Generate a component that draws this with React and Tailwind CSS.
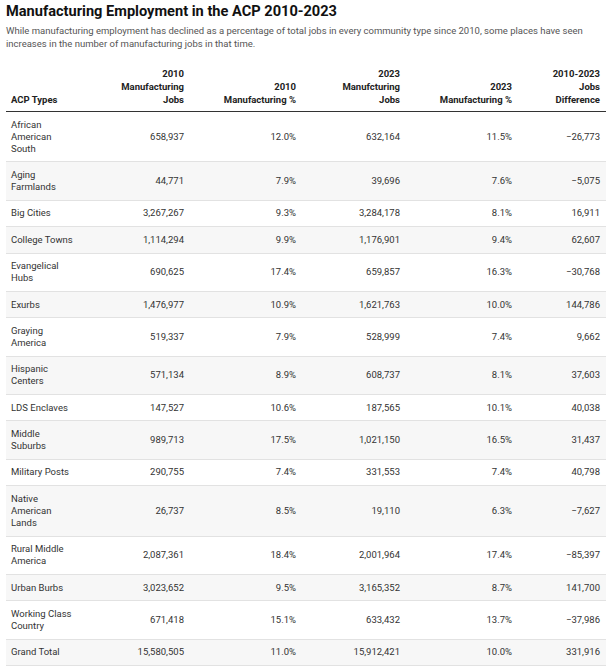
import React from "react";

const rows = [
  [["African", "American", "South"], "658,937", "12.0%", "632,164", "11.5%", "−26,773"],
  [["Aging", "Farmlands"], "44,771", "7.9%", "39,696", "7.6%", "−5,075"],
  [["Big Cities"], "3,267,267", "9.3%", "3,284,178", "8.1%", "16,911"],
  [["College Towns"], "1,114,294", "9.9%", "1,176,901", "9.4%", "62,607"],
  [["Evangelical", "Hubs"], "690,625", "17.4%", "659,857", "16.3%", "−30,768"],
  [["Exurbs"], "1,476,977", "10.9%", "1,621,763", "10.0%", "144,786"],
  [["Graying", "America"], "519,337", "7.9%", "528,999", "7.4%", "9,662"],
  [["Hispanic", "Centers"], "571,134", "8.9%", "608,737", "8.1%", "37,603"],
  [["LDS Enclaves"], "147,527", "10.6%", "187,565", "10.1%", "40,038"],
  [["Middle", "Suburbs"], "989,713", "17.5%", "1,021,150", "16.5%", "31,437"],
  [["Military Posts"], "290,755", "7.4%", "331,553", "7.4%", "40,798"],
  [["Native", "American", "Lands"], "26,737", "8.5%", "19,110", "6.3%", "−7,627"],
  [["Rural Middle", "America"], "2,087,361", "18.4%", "2,001,964", "17.4%", "−85,397"],
  [["Urban Burbs"], "3,023,652", "9.5%", "3,165,352", "8.7%", "141,700"],
  [["Working Class", "Country"], "671,418", "15.1%", "633,432", "13.7%", "−37,986"],
  [["Grand Total"], "15,580,505", "11.0%", "15,912,421", "10.0%", "331,916"],
];

const headers = [
  ["2010", "Manufacturing", "Jobs"],
  ["2010", "Manufacturing %"],
  ["2023", "Manufcturing", "Jobs"],
  ["2023", "Manufacturing %"],
  ["2010-2023", "Jobs", "Difference"],
];

function Lines({ lines }) {
  return lines.map((l, i) => (
    <span key={i} className="block whitespace-nowrap">
      {l}
    </span>
  ));
}

export default function App() {
  return (
    <div className="w-[612px] h-[670px] bg-white px-[6px] pt-[1px] text-[#333] font-['Roboto',sans-serif]">
      <h1 className="text-[14.6px] leading-[20px] font-bold text-[#111]">
        Manufacturing Employment in the ACP 2010-2023
      </h1>
      <p className="mt-[3px] text-[9.5px] leading-[13px] text-[#555] whitespace-nowrap">
        While manufacturing employment has declined as a percentage of total jobs in every community type since 2010, some places have seen
        <br />
        increases in the number of manufacturing jobs in that time.
      </p>
      <table className="mt-[17px] w-[600px] table-fixed border-collapse text-[9.5px]">
        <colgroup>
          <col className="w-[80px]" />
          <col className="w-[104px]" />
          <col className="w-[112px]" />
          <col className="w-[104px]" />
          <col className="w-[112px]" />
          <col className="w-[88px]" />
        </colgroup>
        <thead>
          <tr className="border-b-[1.5px] border-[#333]">
            <th className="align-bottom text-left font-bold leading-[13px] px-[5px] pb-[5px] text-[#222]">
              ACP Types
            </th>
            {headers.map((h, i) => (
              <th
                key={i}
                className="align-bottom text-right font-bold leading-[13px] px-[6px] pb-[5px] text-[#222]"
              >
                <Lines lines={h} />
              </th>
            ))}
          </tr>
        </thead>
        <tbody>
          {rows.map((r, i) => (
            <tr
              key={i}
              className={
                "border-b border-[#e2e2e2] " + (i % 2 === 1 ? "bg-[#f7f7f7]" : "bg-white")
              }
            >
              <td className="text-left leading-[12px] px-[5px] py-[6.7px] align-middle">
                <Lines lines={r[0]} />
              </td>
              {r.slice(1).map((v, j) => (
                <td
                  key={j}
                  className="text-right leading-[12px] px-[6px] py-[6.7px] align-middle whitespace-nowrap"
                >
                  {v}
                </td>
              ))}
            </tr>
          ))}
        </tbody>
      </table>
    </div>
  );
}
